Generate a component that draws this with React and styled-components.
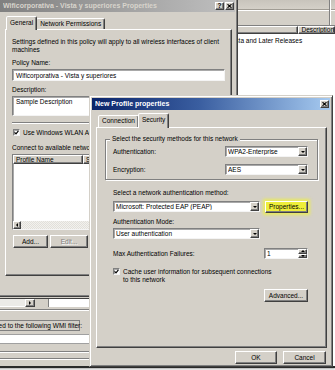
import React from 'react';
import styled, { createGlobalStyle, css } from 'styled-components';

const face = '#d4d0c8';

const GlobalStyle = createGlobalStyle`
  html, body { margin: 0; padding: 0; background: #fff; }
  body {
    font-family: "Liberation Sans", Arial, sans-serif;
    font-size: 6.5px;
    line-height: 7.5px;
    color: #000;
  }
  * { box-sizing: border-box; }
`;

const raised = css`
  border: 1px solid;
  border-color: #fff #404040 #404040 #fff;
  box-shadow: inset -1px -1px #808080;
`;

const sunken = css`
  border: 1px solid;
  border-color: #808080 #f4f4f4 #f4f4f4 #808080;
  box-shadow: inset 1px 1px rgba(64, 64, 64, 0.45);
`;

const Desktop = styled.div`
  position: relative;
  width: 335px;
  height: 370px;
  overflow: hidden;
  background: #fff;
`;

/* ---------- background MMC window ---------- */

const BackWindow = styled.div`
  position: absolute;
  left: -52px;
  top: 0;
  width: 387px;
  height: 368px;
  background: ${face};
  border-bottom: 2px solid #2a2a2a;
  box-shadow: 0 1px 2px rgba(0, 0, 0, 0.35);
  display: flex;
  flex-direction: column;
`;

const MenuStrip = styled.div`
  flex: none;
  height: 10px;
  border-bottom: 1px solid #a09c94;
  background: linear-gradient(#c8c4bc, ${face});
`;

const ToolStrip = styled.div`
  flex: none;
  height: 16px;
  border-top: 1px solid #fff;
  border-bottom: 1px solid #808080;
  display: flex;
  justify-content: flex-end;
`;

const ToolEdge = styled.div`
  width: 6px;
  margin-top: -11px;
  border-left: 1px solid #808080;
  box-shadow: inset 1px 0 #fff;
`;

const Body = styled.div`
  flex: 1;
  min-height: 0;
  display: flex;
`;

const LeftPane = styled.div`
  width: 250px;
  display: flex;
  flex-direction: column;
`;

const ListPane = styled.div`
  flex: 1;
  background: #fff;
  border-left: 1px solid #808080;
  display: flex;
  flex-direction: column;
`;

const ListHeader = styled.div`
  flex: none;
  display: flex;
  height: ${p => p.$h || 8}px;
`;

const HeadCell = styled.div`
  ${raised};
  background: ${face};
  width: ${p => (p.$w ? `${p.$w}px` : 'auto')};
  flex: ${p => (p.$w ? 'none' : 1)};
  padding-left: ${p => p.$indent || 2}px;
  line-height: ${p => p.$lh || 6}px;
  white-space: nowrap;
  overflow: hidden;
`;

const ListRow = styled.div`
  padding: 3px 3px 0 ${p => p.$indent || 3}px;
  white-space: nowrap;
`;

const PaneFoot = styled.div`
  margin-top: auto;
  padding-bottom: 6px;
  display: flex;
  flex-direction: column;
`;

const ScrollRow = styled.div`
  display: flex;
  height: 9px;
  border-top: 1px solid #404040;
`;

const Track = styled.div`
  width: 77px;
  background: #ecebe7;
  border-bottom: 1px solid #fff;
`;

const ArrowBtn = styled.div`
  ${raised};
  width: ${p => p.$w || 10}px;
  height: ${p => p.$h || 8}px;
  background: ${face};
  display: flex;
  align-items: center;
  justify-content: center;
  flex: none;
`;

const Gap = styled.div`
  width: 13px;
`;

const WhiteStrip = styled.div`
  flex: 1;
  background: #fff;
  border-left: 1px solid #808080;
`;

const Rule = styled.div`
  flex: none;
  height: 2px;
  margin-top: ${p => p.$mt || 0}px;
  border-top: 1px solid #808080;
  border-bottom: 1px solid #fff;
`;

const Caption = styled.div`
  width: 132px;
  height: 11px;
  margin-top: 9px;
  border: 1px solid #808080;
  border-left: none;
  padding-left: 4px;
  line-height: 9px;
  white-space: nowrap;
`;

const LinkField = styled.div`
  height: 10px;
  margin-top: 3px;
  background: #fff;
  border-top: 1px solid #a0a0a0;
  border-bottom: 1px solid #a0a0a0;
`;

/* ---------- dialog frame ---------- */

const Dialog = styled.div`
  position: absolute;
  left: ${p => p.$x}px;
  top: ${p => p.$y}px;
  width: ${p => p.$w}px;
  height: ${p => p.$h}px;
  background: ${face};
  border: 1px solid;
  border-color: ${face} #404040 #404040 ${face};
  box-shadow: inset 1px 1px #fff, inset -1px -1px #808080;
  padding: 2px;
  display: flex;
  flex-direction: column;
`;

const TitleBar = styled.div`
  flex: none;
  height: 12px;
  display: flex;
  align-items: center;
  gap: 1px;
  padding: 0 1px 0 3px;
  background: ${p =>
    p.$active
      ? 'linear-gradient(90deg, #0a246a, #3a5ea0 45%, #a6caf0)'
      : 'linear-gradient(90deg, #808080, #c0c0c0)'};
  color: ${p => (p.$active ? '#fff' : '#d8d4cc')};
  font-weight: bold;
  font-size: 7px;
`;

const TitleText = styled.span`
  flex: 1;
  white-space: nowrap;
  overflow: hidden;
`;

const CapButton = styled.span`
  ${raised};
  width: 9px;
  height: 8px;
  background: ${face};
  color: #000;
  font-size: 6.5px;
  line-height: 6px;
  display: flex;
  align-items: center;
  justify-content: center;
`;

const TabArea = styled.div`
  padding: ${p => p.$pt}px 3px 0 ${p => p.$pl}px;
  display: flex;
  flex-direction: column;
`;

const TabStrip = styled.div`
  display: flex;
  align-items: flex-end;
  height: ${p => p.$h}px;
  padding-left: ${p => p.$indent || 1}px;
`;

const Tab = styled.div`
  position: relative;
  z-index: ${p => (p.$active ? 2 : 1)};
  height: ${p => (p.$active ? p.$hh + 1 : p.$hh - 2)}px;
  margin-bottom: ${p => (p.$active ? -1 : 0)}px;
  margin-left: ${p => (p.$first ? 0 : -1)}px;
  padding: ${p => (p.$active ? 2 : 1)}px 3px 0;
  background: ${face};
  border: 1px solid;
  border-bottom: none;
  border-color: #fff #404040 transparent #fff;
  box-shadow: inset -1px 0 #808080;
  border-radius: 2px 2px 0 0;
  white-space: nowrap;
`;

const TabPanel = styled.div`
  ${raised};
  height: ${p => p.$h}px;
  padding: ${p => p.$pad};
  display: flex;
  flex-direction: column;
`;

/* ---------- controls ---------- */

const Text = styled.div`
  margin-top: ${p => p.$mt || 0}px;
  margin-left: ${p => p.$ml || 0}px;
  white-space: ${p => (p.$wrap ? 'normal' : 'nowrap')};
`;

const TextField = styled.div`
  ${sunken};
  background: #fff;
  height: ${p => p.$h || 12}px;
  margin-top: ${p => p.$mt || 0}px;
  padding: ${p => p.$py || 2}px 3px 0;
  white-space: nowrap;
  overflow: hidden;
`;

const CheckRow = styled.div`
  display: flex;
  align-items: flex-start;
  gap: 3px;
  margin-top: ${p => p.$mt || 0}px;
  margin-left: ${p => p.$ml || 0}px;
  white-space: nowrap;
`;

const CheckLabel = styled.span`
  width: ${p => p.$w}px;
  white-space: normal;
`;

const CheckBox = styled.span`
  ${sunken};
  flex: none;
  width: 7px;
  height: 7px;
  background: #fff;
  display: flex;
  align-items: center;
  justify-content: center;
`;

const ListBox = styled.div`
  ${sunken};
  background: #fff;
  height: 76px;
  margin-top: 3px;
  display: flex;
  flex-direction: column;
`;

const ListBody = styled.div`
  flex: 1;
`;

const HScroll = styled.div`
  flex: none;
  height: 8px;
  display: flex;
  background: repeating-conic-gradient(#f2f1ee 0 25%, #e2e0da 0 50%) 0 0 / 2px 2px;
`;

const ButtonRow = styled.div`
  display: flex;
  gap: ${p => p.$gap || 2}px;
  margin-top: ${p => p.$mt || 0}px;
  margin-left: ${p => p.$ml || 0}px;
  justify-content: ${p => (p.$end ? 'flex-end' : 'flex-start')};
  padding-right: ${p => p.$pr || 0}px;
`;

const Button = styled.div`
  ${raised};
  flex: none;
  width: ${p => p.$w}px;
  height: ${p => p.$h || 13}px;
  background: ${p => (p.$highlight ? '#eeee3a' : face)};
  color: ${p => (p.$disabled ? '#808080' : '#000')};
  text-shadow: ${p => (p.$disabled ? '1px 1px #fff' : 'none')};
  display: flex;
  align-items: center;
  justify-content: center;
  white-space: nowrap;
  ${p =>
    p.$highlight &&
    css`
      box-shadow: inset -1px -1px #808080, 0 0 3px 2px rgba(238, 240, 70, 0.85);
    `}
`;

const GroupBox = styled.div`
  margin-top: ${p => p.$mt || 0}px;
  border: 1px solid #808080;
  box-shadow: inset 1px 1px #fff, 1px 1px #fff;
  padding: 0 9px 4px 7px;
  display: flex;
  flex-direction: column;
`;

const Legend = styled.div`
  align-self: flex-start;
  margin: -5px 0 0 -3px;
  padding: 0 2px;
  line-height: 8px;
  background: ${face};
  white-space: nowrap;
`;

const FieldRow = styled.div`
  display: flex;
  align-items: center;
  justify-content: space-between;
  margin-top: ${p => p.$mt || 0}px;
  white-space: nowrap;
`;

const Indent = styled.div`
  margin: 0 10px 0 8px;
  display: flex;
  flex-direction: column;
`;

const Select = styled.div`
  ${sunken};
  flex: none;
  width: ${p => p.$w}px;
  height: 11px;
  margin-top: ${p => p.$mt || 0}px;
  background: #fff;
  display: flex;
  align-items: center;
  padding-left: 2px;
`;

const SelText = styled.span`
  flex: 1;
  white-space: nowrap;
  overflow: hidden;
`;

const DropBtn = styled.span`
  ${raised};
  flex: none;
  width: 9px;
  height: 9px;
  background: ${face};
  display: flex;
  align-items: center;
  justify-content: center;
`;

const Tri = styled.span`
  width: 0;
  height: 0;
  ${p =>
    p.$dir === 'down' &&
    css`
      border-left: 2.5px solid transparent;
      border-right: 2.5px solid transparent;
      border-top: 2.5px solid #000;
    `}
  ${p =>
    p.$dir === 'up' &&
    css`
      border-left: 2px solid transparent;
      border-right: 2px solid transparent;
      border-bottom: 2px solid #000;
    `}
  ${p =>
    p.$dir === 'left' &&
    css`
      border-top: 2px solid transparent;
      border-bottom: 2px solid transparent;
      border-right: 2px solid #000;
    `}
  ${p =>
    p.$dir === 'right' &&
    css`
      border-top: 2px solid transparent;
      border-bottom: 2px solid transparent;
      border-left: 2px solid #000;
    `}
`;

const SpinBox = styled.div`
  ${sunken};
  width: 44px;
  height: 11px;
  background: #fff;
  display: flex;
  padding-left: 2px;
  align-items: center;
`;

const SpinBtns = styled.span`
  display: flex;
  flex-direction: column;
  width: 9px;
  height: 9px;
`;

const SpinBtn = styled.span`
  ${raised};
  flex: 1;
  background: ${face};
  display: flex;
  align-items: center;
  justify-content: center;
`;

const Check = () => (
  <svg width="5" height="5" viewBox="0 0 5 5">
    <path d="M0.6 2.4 L2 3.8 L4.4 0.9" stroke="#000" strokeWidth="1.2" fill="none" />
  </svg>
);

const CloseGlyph = () => (
  <svg width="5" height="4" viewBox="0 0 5 4">
    <path d="M0.5 0.2 L4.5 3.8 M4.5 0.2 L0.5 3.8" stroke="#000" strokeWidth="1.1" fill="none" />
  </svg>
);

const Dropdown = ({ w, mt, children }) => (
  <Select $w={w} $mt={mt}>
    <SelText>{children}</SelText>
    <DropBtn>
      <Tri $dir="down" />
    </DropBtn>
  </Select>
);

export default function App() {
  return (
    <Desktop>
      <GlobalStyle />

      <BackWindow>
        <MenuStrip />
        <ToolStrip>
          <ToolEdge />
        </ToolStrip>
        <Body>
          <LeftPane>
            <PaneFoot>
              <ScrollRow>
                <Track />
                <ArrowBtn>
                  <Tri $dir="right" />
                </ArrowBtn>
                <Gap />
                <WhiteStrip />
              </ScrollRow>
              <Rule $mt={2} />
              <Caption>This GPO is linked to the following WMI filter:</Caption>
              <LinkField />
              <Rule $mt={7} />
              <Rule $mt={5} />
            </PaneFoot>
          </LeftPane>
          <ListPane>
            <ListHeader>
              <HeadCell $w={113} $indent={29}>Type</HeadCell>
              <HeadCell>Description</HeadCell>
            </ListHeader>
            <ListRow $indent={16}>Windows Vista and Later Releases</ListRow>
          </ListPane>
        </Body>
      </BackWindow>

      <Dialog $x={-3} $y={-3} $w={241} $h={300}>
        <TitleBar>
          <TitleText>Wificorporativa - Vista y superiores Properties</TitleText>
          <CapButton>?</CapButton>
          <CapButton>
            <CloseGlyph />
          </CapButton>
        </TitleBar>
        <TabArea $pt={4} $pl={5}>
          <TabStrip $h={13}>
            <Tab $active $first $hh={13}>
              General
            </Tab>
            <Tab $hh={13}>Network Permissions</Tab>
          </TabStrip>
          <TabPanel $h={247} $pad="8px 6px 0 6px">
            <Text $wrap>
              Settings defined in this policy will apply to all wireless interfaces of client machines
            </Text>
            <Text $mt={6}>Policy Name:</Text>
            <TextField $mt={2} $py={2}>Wificorporativa - Vista y superiores</TextField>
            <Text $mt={5}>Description:</Text>
            <TextField $mt={3} $h={20} $py={1}>Sample Description</TextField>
            <Rule $mt={6} />
            <CheckRow $mt={5} $ml={1}>
              <CheckBox>
                <Check />
              </CheckBox>
              Use Windows WLAN AutoConfig service for clients
            </CheckRow>
            <Text $mt={7}>Connect to available networks in the order of profiles listed below:</Text>
            <ListBox>
              <ListHeader $h={9}>
                <HeadCell $w={70} $lh={7}>Profile Name</HeadCell>
                <HeadCell $w={40} $lh={7}>SSID</HeadCell>
                <HeadCell $w={50} $lh={7}>Authentication</HeadCell>
                <HeadCell $lh={7}>Encryption</HeadCell>
              </ListHeader>
              <ListBody />
              <HScroll>
                <ArrowBtn $w={8} $h={8}>
                  <Tri $dir="left" />
                </ArrowBtn>
              </HScroll>
            </ListBox>
            <ButtonRow $mt={5} $ml={1}>
              <Button $w={35}>Add...</Button>
              <Button $w={38} $disabled>
                Edit...
              </Button>
              <Button $w={38} $disabled>
                Remove
              </Button>
            </ButtonRow>
          </TabPanel>
        </TabArea>
      </Dialog>

      <Dialog $x={89} $y={95} $w={244} $h={272}>
        <TitleBar $active>
          <TitleText>New Profile properties</TitleText>
          <CapButton>
            <CloseGlyph />
          </CapButton>
        </TitleBar>
        <TabArea $pt={3} $pl={4}>
          <TabStrip $h={14} $indent={2}>
            <Tab $first $hh={14}>
              Connection
            </Tab>
            <Tab $active $hh={14}>
              Security
            </Tab>
          </TabStrip>
          <TabPanel $h={221} $pad="0 8px">
            <GroupBox $mt={11}>
              <Legend>Select the security methods for this network</Legend>
              <FieldRow $mt={3}>
                Authentication:
                <Dropdown w={83}>WPA2-Enterprise</Dropdown>
              </FieldRow>
              <FieldRow $mt={7}>
                Encryption:
                <Dropdown w={83}>AES</Dropdown>
              </FieldRow>
            </GroupBox>
            <Indent>
              <Text $mt={9}>Select a network authentication method:</Text>
              <FieldRow $mt={4}>
                <Dropdown w={147}>Microsoft: Protected EAP (PEAP)</Dropdown>
                <Button $w={43} $h={12} $highlight>
                  Properties...
                </Button>
              </FieldRow>
              <Text $mt={5}>Authentication Mode:</Text>
              <Dropdown w={147} mt={3}>
                User authentication
              </Dropdown>
              <FieldRow $mt={9}>
                Max Authentication Failures:
                <SpinBox>
                  <SelText>1</SelText>
                  <SpinBtns>
                    <SpinBtn>
                      <Tri $dir="up" />
                    </SpinBtn>
                    <SpinBtn>
                      <Tri $dir="down" />
                    </SpinBtn>
                  </SpinBtns>
                </SpinBox>
              </FieldRow>
              <CheckRow $mt={9}>
                <CheckBox>
                  <Check />
                </CheckBox>
                <CheckLabel $w={150}>
                  Cache user information for subsequent connections to this network
                </CheckLabel>
              </CheckRow>
              <ButtonRow $mt={6} $end>
                <Button $w={44}>Advanced...</Button>
              </ButtonRow>
            </Indent>
          </TabPanel>
          <ButtonRow $mt={3} $end $gap={6} $pr={1}>
            <Button $w={42}>OK</Button>
            <Button $w={43}>Cancel</Button>
          </ButtonRow>
        </TabArea>
      </Dialog>
    </Desktop>
  );
}
